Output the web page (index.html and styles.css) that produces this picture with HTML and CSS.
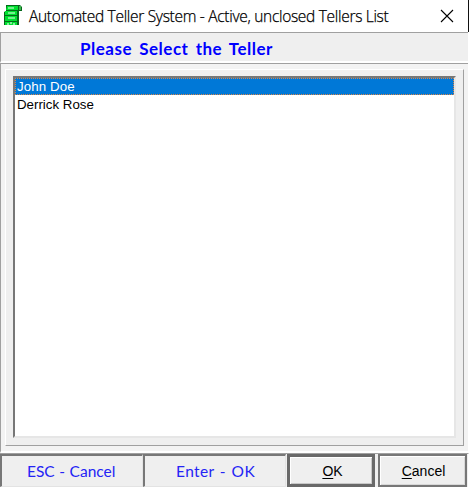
FILE: index.html
```
<!DOCTYPE html>
<html lang="en">
<head>
    <meta charset="UTF-8">
    <title>Automated Teller System</title>
    <link rel="stylesheet" href="styles.css">
</head>
<body>
    <div class="window">
        <div class="titlebar">
            <svg class="app-icon" width="19" height="21" viewBox="0 0 19 21">
                <path d="M2 0h14l2 2v4h-3v14H0V7l2-1z" fill="#04691a"/>
                <path d="M3 1h11v4H2zM1 6h12v4H1zM1 11h12v5H1zM1 17h12v3H1z" fill="#00e030"/>
                <path d="M15 1h2v4h-2z" fill="#3cb54f"/>
                <path d="M4 3h6M4 8h7M4 13h7" stroke="#e6ffe9" stroke-width="1.2"/>
                <path d="M3 19h2M6 18h2M9 19h2" stroke="#fff"/>
            </svg>
            <span class="title">Automated Teller System - Active, unclosed Tellers List</span>
            <svg class="close" width="14" height="14" viewBox="0 0 14 14">
                <path d="M1 1l12 12M13 1L1 13" stroke="#000" stroke-width="1.1"/>
            </svg>
        </div>
        <div class="heading"><span>Please Select the Teller</span></div>
        <div class="panel">
            <div class="frame">
                <ul class="teller-list">
                    <li class="selected">John Doe</li>
                    <li>Derrick Rose</li>
                </ul>
            </div>
        </div>
        <div class="footer">
            <div class="hint"><span>ESC - Cancel</span></div>
            <div class="hint"><span>Enter - OK</span></div>
            <button class="btn btn-ok"><span><u>O</u>K</span></button>
            <button class="btn btn-cancel"><span><u>C</u>ancel</span></button>
        </div>
    </div>
</body>
</html>
```
FILE: styles.css
```
* {
    margin: 0;
    padding: 0;
    box-sizing: border-box;
}

body {
    background: #fff;
    overflow: hidden;
}

.window {
    width: 469px;
    height: 491px;
    display: flex;
    flex-direction: column;
}

.titlebar {
    height: 32px;
    display: flex;
    align-items: center;
    padding: 0 14px 0 4px;
    border-right: 1px solid #111;
}

.app-icon {
    margin-top: -1px;
}

.title {
    margin-left: 6px;
    font: 300 15.5px/31px "Segoe UI", "Open Sans", sans-serif;
    letter-spacing: -0.3px;
    -webkit-text-stroke: 0.25px #000;
    white-space: nowrap;
    color: #000;
}

.close {
    margin-left: auto;
}

.heading {
    height: 31px;
    margin-right: 1px;
    background: #efefef;
    border-top: 1px solid #a0a0a0;
    border-left: 1px solid #a0a0a0;
    border-bottom: 2px solid #fff;
    padding-left: 79px;
    font: bold 17px/31px "Comic Sans MS", "Lato", sans-serif;
    letter-spacing: 0.5px;
    word-spacing: 2.6px;
    white-space: nowrap;
    color: #0000ff;
}

.panel {
    height: 390px;
    margin-right: 1px;
    padding: 5px 3px 5px 4px;
    background: #f3f3f3;
    border-top: 1px solid #a0a0a0;
    border-left: 1px solid #a0a0a0;
    border-bottom: 2px solid #fff;
}

.frame {
    width: 459px;
    height: 377px;
    padding: 6px 7px 6px 7px;
    background: #efefef;
    border: 1px solid;
    border-color: #fff #a0a0a0 #a0a0a0 #fff;
}

.teller-list {
    height: 362px;
    width: 443px;
    list-style: none;
    background: #fff;
    border: 2px solid;
    border-color: #777 #e6e6e6 #e6e6e6 #777;
    font: 13.3px/18px "Liberation Sans", Arial, sans-serif;
    color: #000;
}

.teller-list li {
    height: 18px;
    padding-left: 2px;
}

.teller-list .selected {
    height: 17px;
    background: #0078d7;
    border: 1px dotted #d98648;
    padding-left: 1px;
    margin-bottom: 1px;
    line-height: 16px;
    letter-spacing: 0.1px;
    color: #fff;
}

.footer {
    height: 36px;
    display: flex;
    background: #efefef;
    border-top: 1px solid #a0a0a0;
    border-right: 1px solid #fff;
    border-bottom: 2px solid #fff;
}

.hint {
    width: 143px;
    height: 33px;
    padding-left: 25px;
    border: 1px solid;
    border-width: 2px 1px 1px 2px;
    border-color: #777 #e3e3e3 #e3e3e3 #777;
    font: 15.5px/31px "Comic Sans MS", "Lato", sans-serif;
    word-spacing: 0.6px;
    white-space: nowrap;
    color: #2424f5;
}

.hint + .hint {
    padding-left: 31px;
    letter-spacing: 0.4px;
    word-spacing: 1.2px;
}

.btn {
    height: 33px;
    background: #efefef;
    font: 14px/26px "Liberation Sans", Arial, sans-serif;
    color: #000;
}

.btn u {
    text-underline-offset: 2px;
}

.btn-ok {
    width: 88px;
    margin-left: 1px;
    padding-left: 3px;
    border: 3px solid #696969;
    box-shadow: inset 1px 1px #fff, inset -1px -1px #c8c8c8;
}

.btn-cancel {
    width: 89px;
    margin-left: 3px;
    padding-left: 2px;
    border: 2px solid #777;
    box-shadow: inset 1px 1px #fff, inset -1px -1px #d8d8d8;
}
```
